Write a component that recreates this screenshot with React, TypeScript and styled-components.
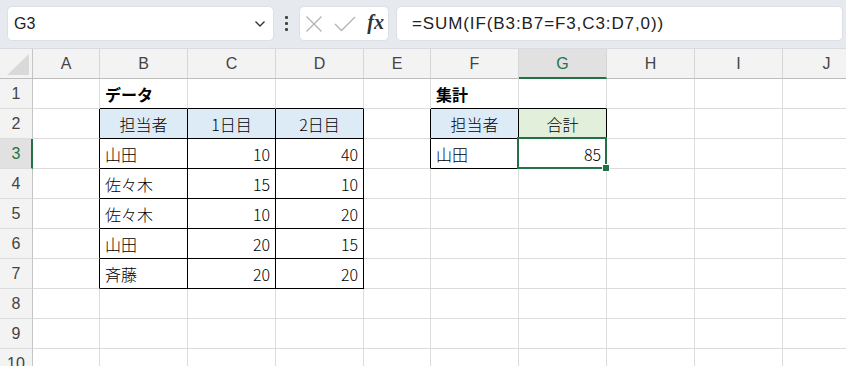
import React from 'react';
import styled, { createGlobalStyle, css } from 'styled-components';

const GlobalStyle = createGlobalStyle`
  html, body {
    margin: 0;
    padding: 0;
    background: #ffffff;
    overflow: hidden;
  }
  * { box-sizing: border-box; }
`;

const COLS = ['A', 'B', 'C', 'D', 'E', 'F', 'G', 'H', 'I', 'J'];
const WIDTHS = [67, 88, 88, 88, 67, 88, 88, 88, 88, 88];
const ROW_COUNT = 10;
const SEL_ROW = 3;
const SEL_COL = 6;

const GREEN = '#217346';
const GRID = '#dcdcdc';
const BLUE_FILL = '#ddebf7';
const GREEN_FILL = '#e2efda';

type CellData = { text: string; align?: 'left' | 'right' | 'center'; fill?: string; bold?: boolean };

// row number -> column index -> content
const DATA: Record<number, Record<number, CellData>> = {
  1: { 1: { text: 'データ', bold: true }, 5: { text: '集計', bold: true } },
  2: {
    1: { text: '担当者', align: 'center', fill: BLUE_FILL },
    2: { text: '1日目', align: 'center', fill: BLUE_FILL },
    3: { text: '2日目', align: 'center', fill: BLUE_FILL },
    5: { text: '担当者', align: 'center', fill: BLUE_FILL },
    6: { text: '合計', align: 'center', fill: GREEN_FILL },
  },
  3: { 1: { text: '山田' }, 2: { text: '10', align: 'right' }, 3: { text: '40', align: 'right' }, 5: { text: '山田' }, 6: { text: '85', align: 'right' } },
  4: { 1: { text: '佐々木' }, 2: { text: '15', align: 'right' }, 3: { text: '10', align: 'right' } },
  5: { 1: { text: '佐々木' }, 2: { text: '10', align: 'right' }, 3: { text: '20', align: 'right' } },
  6: { 1: { text: '山田' }, 2: { text: '20', align: 'right' }, 3: { text: '15', align: 'right' } },
  7: { 1: { text: '斉藤' }, 2: { text: '20', align: 'right' }, 3: { text: '20', align: 'right' } },
};

const TABLES = [
  { r1: 2, r2: 7, c1: 1, c2: 3 },
  { r1: 2, r2: 3, c1: 5, c2: 6 },
];

const inTable = (r: number, c: number) =>
  TABLES.some(t => r >= t.r1 && r <= t.r2 && c >= t.c1 && c <= t.c2);

const FormulaBar = styled.div`
  display: flex;
  align-items: center;
  height: 49px;
  padding: 0 3px 1px 7px;
  background: #e6e9ee;
  border-bottom: 1px solid #d9dbe0;
`;

const Box = styled.div`
  display: flex;
  align-items: center;
  height: 35px;
  background: #ffffff;
  border: 1px solid #dcdfe5;
  border-radius: 5px;
`;

const NameBox = styled(Box)`
  width: 267px;
  padding: 0 7px 0 6px;
  justify-content: space-between;
`;

const NameText = styled.span`
  font: 16px 'Liberation Sans', Arial, sans-serif;
  color: #222;
`;

const Grip = styled.div`
  display: flex;
  flex-direction: column;
  gap: 3px;
  margin: 0 11px 0 11px;
  span {
    display: block;
    width: 3px;
    height: 3px;
    background: #444;
    border-radius: 1px;
  }
`;

const FxBox = styled(Box)`
  width: 90px;
  padding: 0 4px 0 5px;
  justify-content: space-between;
`;

const FxText = styled.span`
  font: italic bold 20px 'Liberation Serif', 'Times New Roman', serif;
  color: #333;
  margin-top: -3px;
`;

const FormulaBox = styled(Box)`
  flex: 1;
  margin-left: 7px;
  padding-left: 15px;
  font: 17px 'Liberation Sans', Arial, sans-serif;
  letter-spacing: 0.9px;
  color: #222;
`;

const Sheet = styled.div`
  display: grid;
  grid-template-columns: 33px ${WIDTHS.map(w => `${w}px`).join(' ')};
  grid-auto-rows: 30px;
  overflow: hidden;
  width: 846px;
`;

const Corner = styled.div`
  position: relative;
  background: #f3f3f3;
  border-right: 1px solid #c4c4c4;
  border-bottom: 1px solid #bdbdbd;
  &::after {
    content: '';
    position: absolute;
    right: 3px;
    bottom: 3px;
    width: 0;
    height: 0;
    border-left: 22px solid transparent;
    border-bottom: 21px solid #d9d9d9;
  }
`;

const ColHead = styled.div<{ $sel?: boolean }>`
  display: flex;
  align-items: center;
  justify-content: center;
  font: 16px 'Liberation Sans', Arial, sans-serif;
  color: #444;
  background: #f3f3f3;
  border-right: 1px solid #d6d6d6;
  border-bottom: 1px solid #bdbdbd;
  ${p => p.$sel && css`
    background: #e1e1e1;
    color: ${GREEN};
    border-bottom: 2px solid ${GREEN};
    padding-top: 1px;
  `}
`;

const RowHead = styled.div<{ $sel?: boolean }>`
  display: flex;
  align-items: center;
  justify-content: center;
  font: 16px 'Liberation Sans', Arial, sans-serif;
  color: #444;
  background: #f3f3f3;
  border-right: 1px solid #c4c4c4;
  border-bottom: 1px solid #dcdcdc;
  ${p => p.$sel && css`
    background: #e1e1e1;
    color: ${GREEN};
    border-right: 2px solid ${GREEN};
    padding-left: 1px;
  `}
`;

const Cell = styled.div<{ $align: string; $fill?: string; $bold?: boolean; $right: string; $bottom: string }>`
  position: relative;
  display: flex;
  align-items: center;
  justify-content: ${p => (p.$align === 'right' ? 'flex-end' : p.$align === 'center' ? 'center' : 'flex-start')};
  padding: 0 5px 0 5px;
  font-family: 'Noto Sans CJK JP', 'Liberation Sans', sans-serif;
  font-size: 16px;
  font-weight: ${p => (p.$bold ? 700 : 300)};
  color: #000;
  white-space: nowrap;
  background: ${p => p.$fill || '#ffffff'};
  border-right: 1px solid ${p => p.$right};
  border-bottom: 1px solid ${p => p.$bottom};
`;

const Selection = styled.div`
  position: absolute;
  left: -2px;
  top: -2px;
  right: -1px;
  bottom: -1px;
  border: 2px solid ${GREEN};
  z-index: 2;
  pointer-events: none;
  &::after {
    content: '';
    position: absolute;
    right: -4px;
    bottom: -4px;
    width: 6px;
    height: 6px;
    background: ${GREEN};
    box-shadow: 0 0 0 1px #ffffff;
  }
`;

const Chevron = () => (
  <svg width="12" height="8" viewBox="0 0 12 8">
    <path d="M1.5 1.5 L6 6 L10.5 1.5" fill="none" stroke="#333" strokeWidth="1.4" />
  </svg>
);

const CancelIcon = () => (
  <svg width="18" height="16" viewBox="0 0 18 16">
    <path d="M1.5 0.5 L16.5 15.5 M16.5 0.5 L1.5 15.5" stroke="#b3b3b3" strokeWidth="1.3" fill="none" />
  </svg>
);

const CheckIcon = () => (
  <svg width="22" height="16" viewBox="0 0 22 16">
    <path d="M1 8 L7.5 14.5 L21 1" stroke="#b3b3b3" strokeWidth="1.3" fill="none" />
  </svg>
);

const App: React.FC = () => {
  const rows: React.ReactNode[] = [];

  rows.push(<Corner key="corner" />);
  COLS.forEach((c, i) => {
    rows.push(<ColHead key={`h${c}`} $sel={i === SEL_COL}>{c}</ColHead>);
  });

  for (let r = 1; r <= ROW_COUNT; r++) {
    rows.push(<RowHead key={`r${r}`} $sel={r === SEL_ROW}>{r}</RowHead>);
    COLS.forEach((c, i) => {
      const d = DATA[r]?.[i];
      const right = inTable(r, i) || inTable(r, i + 1) ? '#000' : GRID;
      const bottom = inTable(r, i) || inTable(r + 1, i) ? '#000' : GRID;
      rows.push(
        <Cell
          key={`${c}${r}`}
          $align={d?.align || 'left'}
          $fill={d?.fill}
          $bold={d?.bold}
          $right={right}
          $bottom={bottom}
        >
          {d?.text}
          {r === SEL_ROW && i === SEL_COL && <Selection />}
        </Cell>
      );
    });
  }

  return (
    <>
      <GlobalStyle />
      <FormulaBar>
        <NameBox>
          <NameText>G3</NameText>
          <Chevron />
        </NameBox>
        <Grip><span /><span /><span /></Grip>
        <FxBox>
          <CancelIcon />
          <CheckIcon />
          <FxText>fx</FxText>
        </FxBox>
        <FormulaBox>=SUM(IF(B3:B7=F3,C3:D7,0))</FormulaBox>
      </FormulaBar>
      <Sheet>{rows}</Sheet>
    </>
  );
};

export default App;
